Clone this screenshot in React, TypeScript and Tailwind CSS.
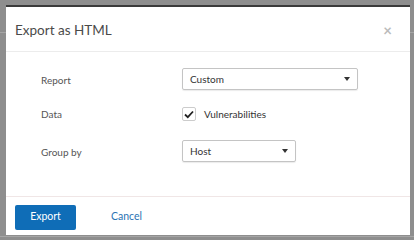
import React from "react";

export default function App() {
  const font = { fontFamily: 'Lato, "Noto Sans", sans-serif' };
  return (
    <div className="w-[414px] h-[240px] bg-[#8e8e8e] overflow-hidden relative" style={font}>
      <div className="absolute left-0 right-0 top-[32px] h-px bg-[#a5a5a5]" />
      <div className="absolute left-0 right-0 top-[236px] h-px bg-[#a5a5a5]" />
      <div className="absolute left-[6px] top-[5px] w-[404px] h-[230px] bg-white border-t-2 border-[#3a3a3a] flex flex-col">
        <div className="h-[45px] flex items-center justify-between pl-[9px] pr-[18px] border-b border-[#ececec]">
          <span className="text-[13.5px] text-[#4a4a4a] mt-[2px]">Export as HTML</span>
          <span className="text-[15px] text-[#bbb] font-bold leading-none mt-[2px]">×</span>
        </div>
        <div className="flex-1 pt-[16px] border-b border-[#f0e6e6]">
          <div className="flex items-center h-[22px]">
            <div className="w-[176px] pl-[35px] text-[10px] text-[#555] mt-[2px]">Report</div>
            <div className="w-[176px] h-[22px] border border-[#c4c4c4] rounded-[2px] flex items-center justify-between px-[7px] shadow-[0_1px_1px_rgba(0,0,0,0.08)]">
              <span className="text-[10px] text-[#333]">Custom</span>
              <span className="w-0 h-0 border-l-[3.5px] border-r-[3.5px] border-t-[4px] border-l-transparent border-r-transparent border-t-[#333]" />
            </div>
          </div>
          <div className="flex items-center h-[20px] mt-[14px]">
            <div className="w-[176px] pl-[35px] text-[10px] text-[#555]">Data</div>
            <div className="w-[14px] h-[14px] border border-[#ccc] rounded-[2px] flex items-center justify-center">
              <svg width="10" height="9" viewBox="0 0 10 9">
                <path d="M1 4.5 L3.8 7.2 L9 1.5" stroke="#222" strokeWidth="1.8" fill="none" />
              </svg>
            </div>
            <span className="ml-[8px] text-[10px] text-[#333]">Vulnerabilities</span>
          </div>
          <div className="flex items-center h-[22px] mt-[16px]">
            <div className="w-[176px] pl-[35px] text-[10px] text-[#555] mt-[2px]">Group by</div>
            <div className="w-[114px] h-[22px] border border-[#c4c4c4] rounded-[2px] flex items-center justify-between px-[7px] shadow-[0_1px_1px_rgba(0,0,0,0.08)]">
              <span className="text-[10px] text-[#333]">Host</span>
              <span className="w-0 h-0 border-l-[3.5px] border-r-[3.5px] border-t-[4px] border-l-transparent border-r-transparent border-t-[#333]" />
            </div>
          </div>
        </div>
        <div className="h-[38px] flex items-center pl-[9px] pt-[2px]">
          <button className="w-[61px] h-[25px] bg-[#0f6db7] rounded-[2px] text-white text-[10.5px]">Export</button>
          <span className="ml-[35px] text-[10.5px] text-[#2b73b3]">Cancel</span>
        </div>
      </div>
    </div>
  );
}
